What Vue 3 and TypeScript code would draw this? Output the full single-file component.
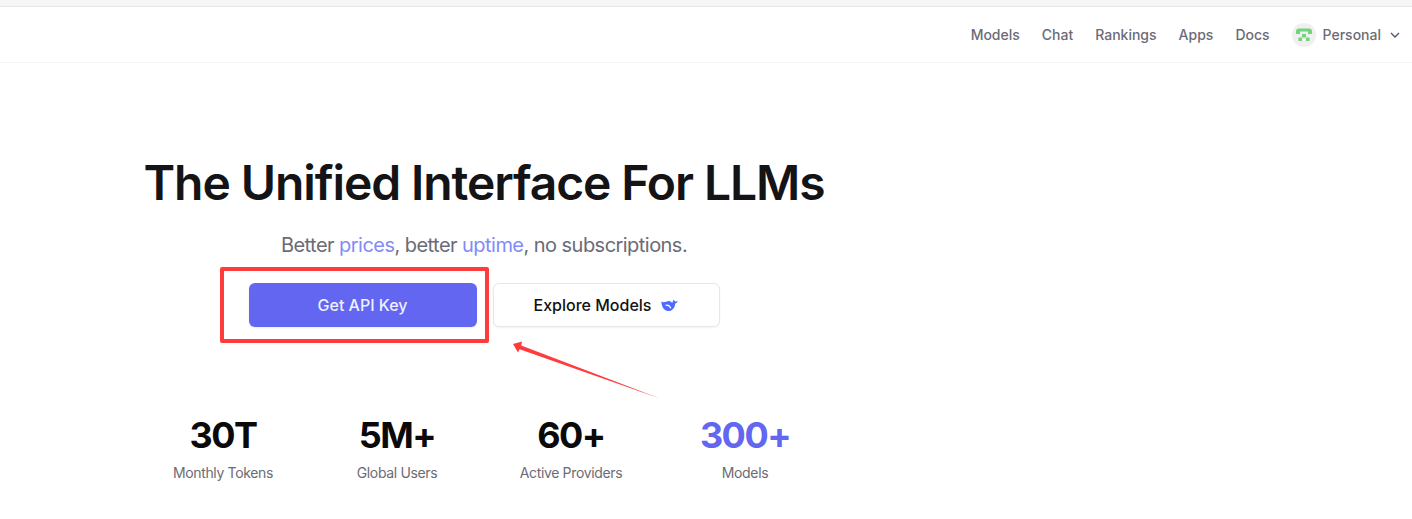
<template>
  <div class="page">
    <div class="top-strip"></div>
    <header class="navbar">
      <nav class="nav-links">
        <a v-for="link in navLinks" :key="link" class="nav-link">{{ link }}</a>
      </nav>
      <div class="account">
        <span class="avatar">
          <svg width="18" height="14" viewBox="0 0 18 14">
            <path d="M1 6 V3.5 Q1 0.5 4 0.5 H14 Q17 0.5 17 3.5 V6 H13 V3.5 H5 V6 Z" fill="#6fd57a" />
            <rect x="7" y="6" width="4" height="3.5" fill="#6fd57a" />
            <rect x="3.5" y="9.5" width="3.5" height="3.5" fill="#6fd57a" />
            <rect x="11" y="9.5" width="3.5" height="3.5" fill="#6fd57a" />
          </svg>
        </span>
        <span class="account-name">Personal</span>
        <svg class="chevron" width="10" height="6" viewBox="0 0 10 6">
          <path d="M1 1 L5 5 L9 1" fill="none" stroke="#4b5563" stroke-width="1.3" />
        </svg>
      </div>
    </header>

    <main class="hero">
      <h1 class="title">The Unified Interface For LLMs</h1>
      <p class="subtitle">
        Better <span class="accent">prices</span>, better <span class="accent">uptime</span>, no subscriptions.
      </p>
      <div class="actions">
        <button class="btn btn-primary">Get API Key</button>
        <button class="btn btn-secondary">
          Explore Models
          <svg class="whale" width="17" height="13" viewBox="0 0 18 13">
            <path d="M0.5 2 C2 3.6 3.8 3.2 6 2.2 C8.6 1 10.6 1.8 11.6 3.6 C12.6 2.8 13 1.8 12.6 0.6 C14 0.8 14.8 1.5 15 2.4 L17.6 1.4 C17.4 3 16.2 4.2 15 4.6 C14.8 8.6 12.2 12.4 7.8 12.4 C3.2 12.4 0.4 7.6 0.5 2 Z" fill="#4d6bfe" />
            <path d="M4.8 6.4 C6.8 5.6 9.2 7 10.4 9.4" fill="none" stroke="#fff" stroke-width="1.3" />
          </svg>
        </button>
      </div>
      <div class="stats">
        <div v-for="stat in stats" :key="stat.label" class="stat">
          <div class="stat-value" :class="{ highlight: stat.highlight }">{{ stat.value }}</div>
          <div class="stat-label">{{ stat.label }}</div>
        </div>
      </div>
    </main>

    <!-- annotation drawn over the screenshot -->
    <div class="callout-box"></div>
    <svg class="callout-arrow" width="1412" height="519" viewBox="0 0 1412 519">
      <polygon points="513,344 522,341.5 521.2,345.4 660,398.5 519.6,349.2 518,352.5" fill="#ff3b3b" />
    </svg>
  </div>
</template>

<script setup lang="ts">
interface Stat {
  value: string;
  label: string;
  highlight?: boolean;
}

const navLinks: string[] = ['Models', 'Chat', 'Rankings', 'Apps', 'Docs'];

const stats: Stat[] = [
  { value: '30T', label: 'Monthly Tokens' },
  { value: '5M+', label: 'Global Users' },
  { value: '60+', label: 'Active Providers' },
  { value: '300+', label: 'Models', highlight: true },
];
</script>

<style>
html,
body {
  margin: 0;
  background: #fff;
  overflow: hidden;
}
</style>

<style scoped>
.page {
  position: relative;
  width: 1412px;
  height: 519px;
  overflow: hidden;
  font-family: Inter, "Liberation Sans", sans-serif;
  background: #fff;
}

.top-strip {
  height: 6px;
  background: #f6f6f6;
  border-bottom: 1px solid #e6e6e6;
}

.navbar {
  display: flex;
  align-items: center;
  justify-content: flex-end;
  height: 55px;
  padding-right: 12px;
  border-bottom: 1px solid #f3f4f6;
}

.nav-links {
  display: flex;
  gap: 22px;
}

.nav-link {
  font-size: 14px;
  font-weight: 500;
  color: #6b6b76;
}

.account {
  display: flex;
  align-items: center;
  margin-left: 22px;
}

.avatar {
  display: flex;
  align-items: center;
  justify-content: center;
  width: 24px;
  height: 24px;
  border-radius: 50%;
  background: #f0f0f0;
}

.account-name {
  margin-left: 7px;
  font-size: 14px;
  font-weight: 500;
  color: #6b6b76;
}

.chevron {
  margin-left: 9px;
}

.hero {
  display: flex;
  flex-direction: column;
  align-items: center;
  width: 696px;
  margin-left: 136px;
  padding-top: 88px;
}

.title {
  margin: 0;
  font-size: 48px;
  line-height: 64px;
  font-weight: 600;
  letter-spacing: -1.1px;
  color: #141416;
  white-space: nowrap;
}

.subtitle {
  margin: 16px 0 0;
  font-size: 20px;
  line-height: 28px;
  letter-spacing: -0.54px;
  color: #6b6b76;
}

.accent {
  color: #818cf8;
}

.actions {
  display: flex;
  gap: 16px;
  margin-top: 24px;
}

.btn {
  display: flex;
  align-items: center;
  justify-content: center;
  height: 44px;
  border-radius: 6px;
  font-family: inherit;
  font-size: 16px;
  font-weight: 500;
  box-sizing: border-box;
}

.btn-primary {
  width: 228px;
  border: none;
  background: #6366f1;
  color: #eef0ff;
  box-shadow: 0 1px 2px rgba(0, 0, 0, 0.08);
}

.btn-secondary {
  width: 227px;
  border: 1px solid #e5e7eb;
  background: #fff;
  color: #111;
  box-shadow: 0 1px 2px rgba(0, 0, 0, 0.05);
}

.whale {
  margin-left: 10px;
}

.stats {
  display: grid;
  grid-template-columns: repeat(4, 174px);
  margin-top: 88px;
}

.stat {
  display: flex;
  flex-direction: column;
  align-items: center;
}

.stat-value {
  font-size: 36px;
  line-height: 40px;
  font-weight: 700;
  letter-spacing: -1.5px;
  color: #0a0a0a;
}

.stat-value.highlight {
  color: #6366f1;
}

.stat-label {
  margin-top: 8px;
  font-size: 14px;
  line-height: 20px;
  letter-spacing: -0.35px;
  color: #6b6b76;
}

.callout-box {
  position: absolute;
  left: 220px;
  top: 267px;
  width: 269px;
  height: 76px;
  box-sizing: border-box;
  border: 4px solid #ff3b3b;
  border-radius: 2px;
}

.callout-arrow {
  position: absolute;
  left: 0;
  top: 0;
  pointer-events: none;
}
</style>
